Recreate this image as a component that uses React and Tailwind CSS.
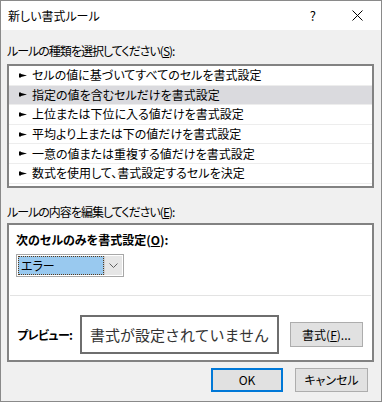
import React from "react";

const rows = [
  "セルの値に基づいてすべてのセルを書式設定",
  "指定の値を含むセルだけを書式設定",
  "上位または下位に入る値だけを書式設定",
  "平均より上または下の値だけを書式設定",
  "一意の値または重複する値だけを書式設定",
  "数式を使用して、書式設定するセルを決定",
];

function Pointer() {
  return (
    <svg width="8" height="7" viewBox="0 0 8 7" className="shrink-0">
      <rect x="0" y="1.5" width="2" height="4" fill="#000" />
      <polygon points="2,2 8,3.5 2,5" fill="#000" />
    </svg>
  );
}

export default function App() {
  return (
    <div
      className="w-[382px] h-[402px] bg-[#f0f0f0] border border-[#8a8a8a] flex flex-col text-[12px] text-black leading-[16px] [font-feature-settings:'palt']"
      style={{ fontFamily: '"Noto Sans CJK JP", "Noto Sans", sans-serif' }}
    >
      {/* title bar */}
      <div className="h-[29px] bg-white flex items-center shrink-0">
        <span className="pl-[7px] text-[12px]">新しい書式ルール</span>
        <span className="ml-auto mr-[36px] text-[13px]">?</span>
        <svg width="11" height="11" viewBox="0 0 11 11" className="mr-[18px]">
          <path d="M0.5 0.5 L10.5 10.5 M10.5 0.5 L0.5 10.5" stroke="#000" strokeWidth="1" />
        </svg>
      </div>

      <div className="flex flex-col pl-[6px] pr-[7px]">
        <div className="mt-[13px] h-[16px] tracking-[-1px]">
          ルールの種類を選択してください(<span className="underline">S</span>):
        </div>
        <div className="mt-[5px] h-[124px] bg-white border-2 border-[#828282] flex flex-col pt-0">
          {rows.map((r, i) => (
            <div
              key={i}
              className={
                "h-[19.6px] flex items-center gap-[5px] pl-[10px] border-b border-[#ededed] " +
                (i === 1 ? "bg-[#dadade]" : "")
              }
            >
              <Pointer />
              <span>{r}</span>
            </div>
          ))}
        </div>

        <div className="mt-[16px] h-[16px] tracking-[-1px]">
          ルールの内容を編集してください(<span className="underline">E</span>):
        </div>
        <div className="mt-[3px] h-[139px] bg-white border-2 border-[#828282] flex flex-col">
          <div className="pl-[7px] pt-[7px] font-bold h-[23px]">
            次のセルのみを書式設定(<span className="underline">O</span>):
          </div>
          <div className="ml-[7px] mt-[6px] w-[108px] h-[23px] border border-[#a8a8a8] flex p-px">
            <div className="flex-1 bg-[#99c9ef] border border-dotted border-[#5a3a1a] flex items-center pl-[2px]">
              エラー
            </div>
            <div className="w-[18px] bg-[#e6e6e6] border-l border-[#cfcfcf] flex items-center justify-center">
              <svg width="9" height="5" viewBox="0 0 9 5">
                <path d="M0.5 0.5 L4.5 4.5 L8.5 0.5" stroke="#606060" fill="none" strokeWidth="1" />
              </svg>
            </div>
          </div>
          <div className="mt-[18px] mx-[1px] h-px bg-[#e3e3e3]" />
          <div className="mt-[19px] flex items-center">
            <span className="pl-[8px] w-[71px] font-bold tracking-[-0.6px]">プレビュー:</span>
            <div className="w-[199px] h-[39px] border-2 border-[#6e6e6e] flex items-center justify-center text-[15px] text-[#333] [font-feature-settings:normal] tracking-[0px]">
              書式が設定されていません
            </div>
            <div className="ml-[11px] w-[73px] h-[25px] bg-[#e1e1e1] border border-[#adadad] flex items-center justify-center">
              書式(<span className="underline">F</span>)...
            </div>
          </div>
        </div>

        <div className="mt-[6px] flex justify-end pr-[6px] gap-[12px]">
          <div className="w-[72px] h-[24px] bg-[#e1e1e1] border-2 border-[#0078d7] flex items-center justify-center">
            OK
          </div>
          <div className="w-[73px] h-[24px] bg-[#e1e1e1] border border-[#adadad] flex items-center justify-center">
            キャンセル
          </div>
        </div>
      </div>
    </div>
  );
}
